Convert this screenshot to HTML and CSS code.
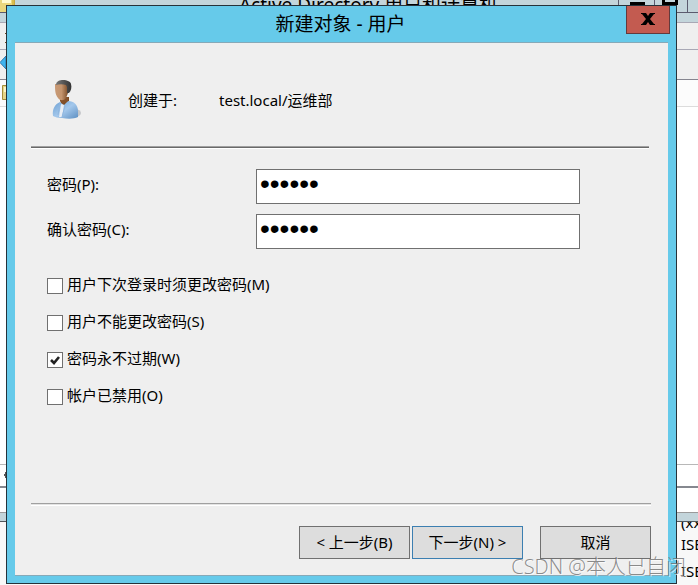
FILE: index.html
```html
<!DOCTYPE html>
<html lang="zh-CN">
<head>
  <meta charset="UTF-8">
  <meta name="viewport" content="width=device-width, initial-scale=1">
  <title>新建对象 - 用户</title>
  <link rel="stylesheet" href="styles.css">
</head>
<body>
  <div class="desktop">
    <div class="console">
      <div class="console-title">
        <svg class="console-icon" width="15" height="14" viewBox="0 0 15 14">
          <rect width="15" height="14" fill="#c9a93c"/>
          <rect width="13" height="12" fill="#ead77c"/>
          <rect x="2" width="9" height="3" fill="#fffbd0"/>
          <rect x="12" width="2" height="14" fill="#d8bc4e"/>
        </svg>
        <span class="console-name">Active Directory 用户和计算机</span>
        <svg class="console-controls" width="80" height="13" viewBox="0 0 80 13">
          <path d="M0.500 0V13M36.500 0V13M69.500 0V13" stroke="#5b5b6e"/>
          <path d="M12 2h15v3h-15z"/>
          <path d="M45.500 0V3.500H58.500V0" fill="none" stroke="#000" stroke-width="3"/>
        </svg>
      </div>
      <div class="console-edge"></div>
      <div class="console-menu">
        <svg width="6" height="26" viewBox="0 0 6 26"><path d="M5 10h1v1h-1zM5 19h1v1h-1z" fill="#6b4a20"/></svg>
      </div>
      <div class="console-toolbar">
        <svg width="6" height="29" viewBox="0 0 6 29"><path d="M6 6L0 12.500L6 19z" fill="#3fb4ee" stroke="#2f78ad"/></svg>
      </div>
      <div class="console-header">
        <svg width="6" height="26" viewBox="0 0 6 26"><path d="M2.500 5.500H8V19.500H2.500z" fill="#e6d588" stroke="#a58f38"/><path d="M4 7h2v5h-2z" fill="#fff7c4"/></svg>
      </div>
      <div class="console-list"></div>
      <div class="console-scroll">
        <svg width="6" height="20" viewBox="0 0 6 20"><path d="M6 7v6h-1v-2h-1v-2h1v-2z" fill="#555"/></svg>
      </div>
      <div class="console-status"></div>
      <div class="console-bottom"></div>
    </div>
    <div class="log">
      <p>(xx</p>
      <p>ISE</p>
      <p>ISE</p>
    </div>

    <form class="dialog">
      <header class="dialog-title">
        <h1>新建对象 - 用户</h1>
        <button class="close" type="button" aria-label="关闭">
          <svg width="14" height="12" viewBox="0 0 14 12"><path d="M0 0H5L7 3L9 0H14V1H13L9 6L13 11H14V12H9L7 9L5 12H0V11H1L5 6L1 1H0z"/></svg>
        </button>
      </header>
      <div class="dialog-body">
        <div class="target">
          <svg class="user" width="32" height="40" viewBox="0 0 32 40">
            <defs>
              <linearGradient id="skin" x1="0" x2="1"><stop offset="0" stop-color="#c99a76"/><stop offset=".5" stop-color="#c3946e"/><stop offset="1" stop-color="#7d4d28"/></linearGradient>
              <linearGradient id="shirt" x1="0" x2="1" y2="1"><stop offset="0" stop-color="#6c9fd2"/><stop offset=".5" stop-color="#a4c8ec"/><stop offset="1" stop-color="#5d8fc2"/></linearGradient>
              <linearGradient id="hair" x1="0" x2="1"><stop offset="0" stop-color="#777"/><stop offset="1" stop-color="#333"/></linearGradient>
            </defs>
            <ellipse cx="23" cy="33" rx="6" ry="4" fill="#c5c7ca"/>
            <path d="M8 17H17V24L12 28L9 24z" fill="#7d4a20"/>
            <path d="M1 36C0 29 3 24 8 22L12 25L16 21C22 21 26 25 26 31V37C22 39 16 39 10 38C6 38 3 37 1 36z" fill="url(#shirt)"/>
            <path d="M8 21L11 24L16 21V17H8z" fill="#83502a"/>
            <path d="M9 24L12 25L10 37H7z" fill="#e9eef5"/>
            <path d="M8 23L6 35M13 26L10 37" fill="none" stroke="#8fb6df"/>
            <path d="M3 4H16V13L14 18C12 21 8 21 6 18C3 14 3 10 3 4z" fill="url(#skin)"/>
            <path d="M4 5C4 1 8 0 11 0C15 0 19 2 19 4C20 7 19 11 17 13L15 13V7L14 5C11 4 7 4 4 5z" fill="url(#hair)"/>
          </svg>
          <span class="target-label">创建于:</span>
          <span>test.local/运维部</span>
        </div>
        <hr class="rule dark">
        <div class="fields">
          <label for="password">密码(P):</label>
          <input id="password" type="password" value="123456">
          <label for="confirm">确认密码(C):</label>
          <input id="confirm" type="password" value="123456">
        </div>
        <div class="options">
          <label><input type="checkbox"><span>用户下次登录时须更改密码(M)</span></label>
          <label><input type="checkbox"><span>用户不能更改密码(S)</span></label>
          <label><input type="checkbox" checked><span>密码永不过期(W)</span></label>
          <label><input type="checkbox"><span>帐户已禁用(O)</span></label>
        </div>
        <hr class="rule">
        <footer class="actions">
          <button type="button">&lt; 上一步(B)</button>
          <button class="default" type="submit">下一步(N) &gt;</button>
          <button class="cancel" type="button">取消</button>
        </footer>
      </div>
    </form>
    <p class="watermark">CSDN @本人已自闭</p>
  </div>
</body>
</html>
```
FILE: styles.css
```css
* {
  box-sizing: border-box;
}

body {
  margin: 0;
  background-color: #f8f8f8;
  color: #000;
  font-family: "Noto Sans", "Noto Sans CJK SC", sans-serif;
  font-size: 15px;
  line-height: 22px;
}

h1, p {
  margin: 0;
}

svg {
  display: block;
}

button, input {
  margin: 0;
  font: inherit;
  color: inherit;
}

.desktop {
  position: relative;
  min-height: 100vh;
  overflow: hidden;
}

/* console window behind the dialog */
.console {
  height: 522px;
  display: flex;
  flex-direction: column;
  background-color: #fff;
}

.console-title {
  height: 13px;
  display: flex;
  justify-content: space-between;
  background-color: #c3d5db;
  border-bottom: 1px solid #5b5b6e;
  overflow: hidden;
}

.console-name {
  flex: 1;
  padding-left: 104px;
  font-size: 19px;
  line-height: 10px;
  text-align: center;
}

.console-edge {
  height: 10px;
  background-color: #c3d5db;
  border-bottom: 1px solid #a8a8b5;
}

.console-menu {
  height: 27px;
  background-color: #efefef;
  border-bottom: 1px solid #a8a8b5;
}

.console-toolbar {
  height: 30px;
  background-color: #efefef;
  border-bottom: 1px solid #85858f;
}

.console-header {
  height: 27px;
  background-color: #fcfcfc;
  border-bottom: 1px solid #dcdcdc;
}

.console-list {
  flex: 1;
}

.console-scroll {
  height: 22px;
  border-top: 1px solid #b8b8b8;
}

.console-status {
  height: 26px;
  border-top: 2px solid #85888f;
}

.console-bottom {
  height: 10px;
  background-color: #c3d5db;
  border-top: 1px solid #9a9a9a;
  border-bottom: 1px solid #50585c;
}

.log {
  display: flex;
  flex-direction: column;
  align-items: flex-end;
  height: 63px;
  overflow: hidden;
  line-height: 27px;
}

.log p {
  width: 17px;
}

.log p:first-child {
  height: 12px;
  line-height: 0;
  overflow: hidden;
}

/* dialog */
.dialog {
  position: absolute;
  top: 5px;
  right: 21px;
  bottom: 1px;
  left: 6px;
  display: flex;
  flex-direction: column;
  padding: 0 8px 7px;
  background-color: #66caea;
  border: 1px solid #26323a;
}

.dialog-title {
  height: 36px;
  display: flex;
  align-items: flex-start;
}

.dialog-title h1 {
  flex: 1;
  padding-left: 40px;
  font-size: 19px;
  font-weight: 400;
  line-height: 36px;
  text-align: center;
}

.close {
  width: 44px;
  height: 28px;
  margin-right: -2px;
  padding: 0 0 1px;
  display: flex;
  align-items: center;
  justify-content: center;
  background-color: #c35b50;
  border: 1px solid #643a3c;
  border-top: 0;
}

.dialog-body {
  flex: 1;
  display: flex;
  flex-direction: column;
  padding: 0 17px 16px 16px;
  background-color: #efefef;
  border-top: 1px solid #86a9b8;
  border-bottom: 1px solid #86a9b8;
}

.target {
  display: flex;
  align-items: center;
  padding: 37px 20px 26px 21px;
}

.target-label {
  width: 91px;
  margin-left: 44px;
}

.rule {
  width: 100%;
  height: 3px;
  margin: 0;
  border: 0;
  border-top: 1px solid #a0a0a0;
  border-bottom: 1px solid #fff;
  background-color: #e3e3e3;
}

.rule.dark {
  width: calc(100% - 2px);
  background-color: #696969;
}

.fields {
  display: grid;
  grid-template-columns: 209px 1fr;
  gap: 10px 0;
  padding: 20px 71px 24px 16px;
}

.fields label {
  padding-top: 4px;
}

.fields input {
  width: 100%;
  height: 35px;
  padding: 0 3px 6px;
  font-family: "Liberation Sans", sans-serif;
  font-size: 28px;
  background-color: #fff;
  border: 1px solid #707070;
  border-radius: 0;
  outline: 0;
}

.options {
  flex: 1;
  display: flex;
  flex-direction: column;
  align-items: flex-start;
  gap: 12px;
  padding-left: 16px;
}

.options label {
  display: flex;
  align-items: center;
  gap: 4px;
}

.options span {
  padding-bottom: 3px;
}

.options input {
  appearance: none;
  width: 16px;
  height: 16px;
  background-color: #fff;
  border: 1px solid #707070;
}

.options input:checked {
  background-image: url("data:image/svg+xml,%3Csvg xmlns='http://www.w3.org/2000/svg' viewBox='0 0 14 14'%3E%3Cpath d='M3 7L6 10L11 4' fill='none' stroke='%23222' stroke-width='2.6'/%3E%3C/svg%3E");
}

.actions {
  display: flex;
  justify-content: flex-end;
  gap: 2px;
  padding-top: 20px;
}

.actions button {
  width: 111px;
  height: 33px;
  padding: 0 0 2px;
  background-color: #ddd;
  border: 1px solid #707070;
}

.actions .default {
  border-color: #3c7fb1;
}

.actions .cancel {
  margin-left: 15px;
}

.watermark {
  position: absolute;
  right: 12px;
  bottom: 5px;
  color: rgba(110, 110, 110, 0.8);
  font-family: "Open Sans", "Noto Sans CJK SC", sans-serif;
  font-size: 20px;
  font-weight: 300;
  line-height: 26px;
  text-shadow: 1px 1px 0 rgba(255, 255, 255, 0.7);
}
```
